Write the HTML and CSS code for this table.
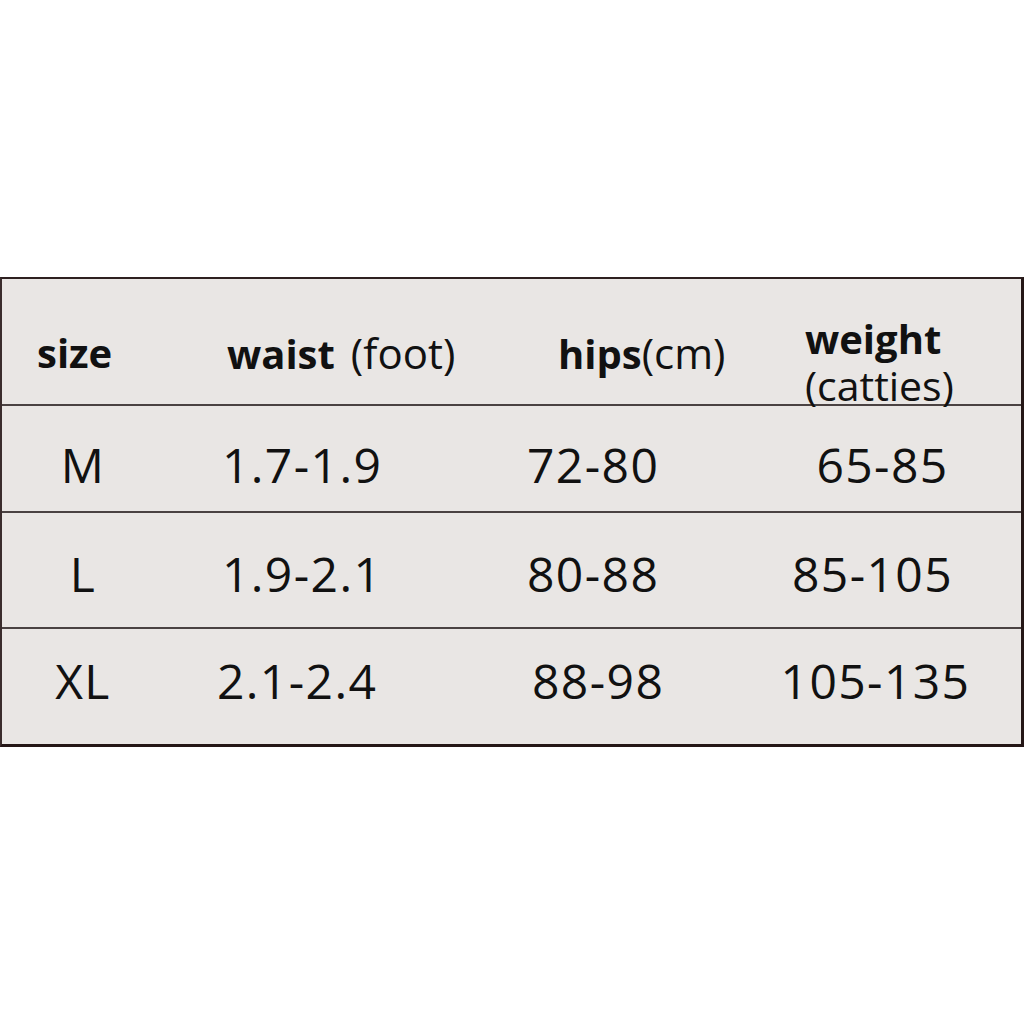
FILE: index.html
```html
<!DOCTYPE html>
<html>
<head>
<meta charset="utf-8">
<link rel="stylesheet" href="styles.css">
</head>
<body>
<div class="page">
  <div class="table">
    <div class="row head">
      <div class="cell c1"><b>size</b></div>
      <div class="cell c2"><b>waist</b><span class="unit gap">(foot)</span></div>
      <div class="cell c3"><b>hips</b><span class="unit">(cm)</span></div>
      <div class="cell c4 stack"><b>weight</b><span class="unit">(catties)</span></div>
    </div>
    <div class="row r-m">
      <div class="cell c1">M</div>
      <div class="cell c2">1.7-1.9</div>
      <div class="cell c3">72-80</div>
      <div class="cell c4 v-m">65-85</div>
    </div>
    <div class="row r-l">
      <div class="cell c1">L</div>
      <div class="cell c2">1.9-2.1</div>
      <div class="cell c3">80-88</div>
      <div class="cell c4 v-l">85-105</div>
    </div>
    <div class="row r-xl">
      <div class="cell c1">XL</div>
      <div class="cell c2 w-xl">2.1-2.4</div>
      <div class="cell c3 h-xl">88-98</div>
      <div class="cell c4 v-xl">105-135</div>
    </div>
  </div>
</div>
</body>
</html>
```

FILE: styles.css
```css
html, body {
  margin: 0;
  padding: 0;
  background: #ffffff;
}

.page {
  padding-top: 277px;
  height: 1024px;
  box-sizing: border-box;
}

.table {
  width: 1024px;
  box-sizing: border-box;
  background: #e9e6e4;
  border-top: 2px solid #2e2020;
  border-left: 2px solid #3a2c2c;
  border-right: 3px solid #241616;
  border-bottom: 3px solid #241616;
  font-family: "Open Sans", "Noto Sans", sans-serif;
  color: #111111;
}

.row {
  display: grid;
  grid-template-columns: 162px 290px 250px 1fr;
  box-sizing: border-box;
  border-bottom: 2px solid #4a4242;
  font-size: 48px;
  line-height: 48px;
  letter-spacing: 1.4px;
}

.row:last-child {
  border-bottom: none;
}

.head {
  height: 127px;
  font-size: 40px;
  line-height: 42px;
  padding-top: 53px;
  letter-spacing: 0;
}

.r-m {
  height: 107px;
  padding-top: 35px;
}

.r-l {
  height: 116px;
  padding-top: 37px;
}

.r-xl {
  height: 115px;
  padding-top: 28px;
}

.cell {
  white-space: nowrap;
}

.c1 {
  text-align: center;
}

.c2 {
  padding-left: 58px;
}

.c3 {
  padding-left: 73px;
}

.c4 {
  text-align: center;
  padding-left: 26px;
}

.head .c1 {
  text-align: left;
  padding-left: 35px;
}

.head .c2 {
  padding-left: 63px;
}

.head .c3 {
  padding-left: 104px;
}

.head .c4 {
  text-align: left;
  padding-left: 101px;
}

.head b {
  font-weight: 700;
}

.unit {
  font-weight: 400;
  font-size: 42px;
}

.unit.gap {
  margin-left: 16px;
}

.stack {
  display: flex;
  flex-direction: column;
  margin-top: -13px;
}

.stack b {
  line-height: 40px;
}

.stack .unit {
  line-height: 40px;
  font-size: 41px;
  margin-top: 6px;
}

.w-xl {
  padding-left: 53px;
}

.h-xl {
  padding-left: 78px;
}

.v-m {
  padding-left: 40px;
}

.v-l {
  padding-left: 20px;
}
```
